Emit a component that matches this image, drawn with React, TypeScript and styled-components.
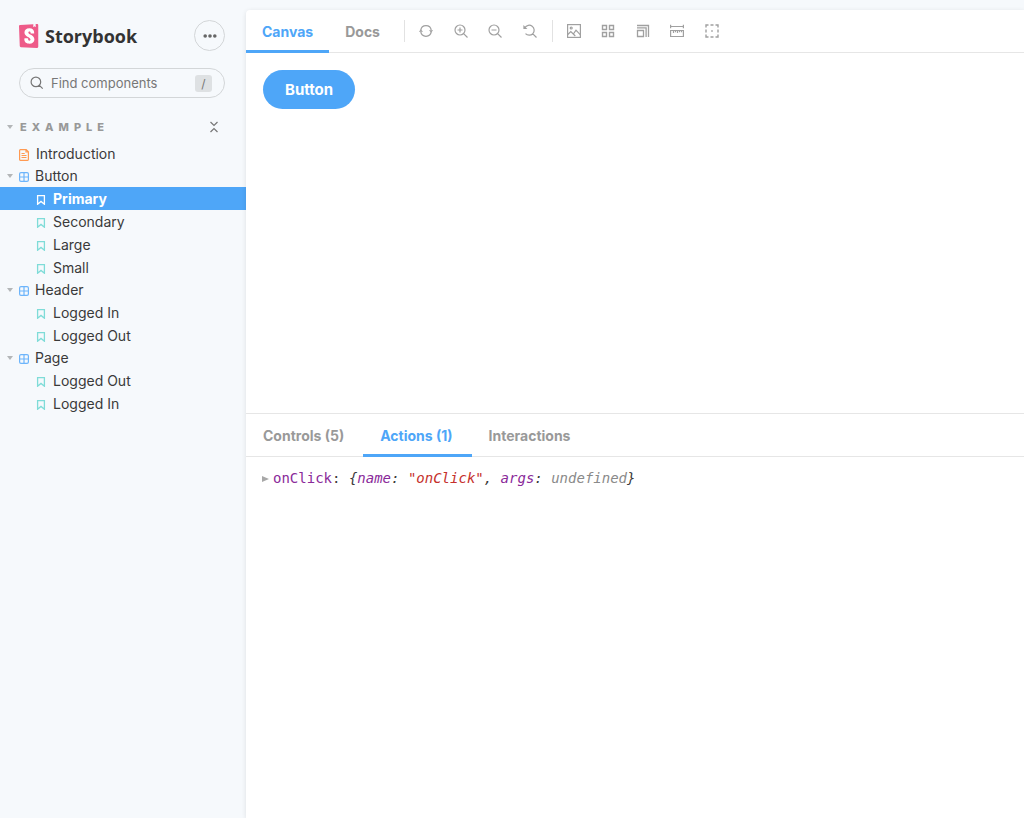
import React from "react";
import styled, { createGlobalStyle, css } from "styled-components";

const color = {
  app: "#f6f9fc",
  accent: "#4ea6f8",
  text: "#3a3a3a",
  muted: "#999999",
  line: "#e6e6e6",
  component: "#6db5fb",
  story: "#7fdcd8",
  document: "#ff9a52",
};

const sans = `Inter, "Liberation Sans", sans-serif`;
const mono = `"DejaVu Sans Mono", "Liberation Mono", monospace`;

const GlobalStyle = createGlobalStyle`
  *, *::before, *::after { box-sizing: border-box; }
  body { margin: 0; background: ${color.app}; font-family: ${sans}; color: ${color.text}; }
  button, input { font-family: inherit; margin: 0; }
  svg { display: block; flex: none; }
`;

const Layout = styled.div`
  display: flex;
  min-height: 100vh;
`;

/* Sidebar */

const Sidebar = styled.aside`
  flex: none;
  width: 246px;
  padding-top: 20px;
`;

const Brand = styled.header`
  display: flex;
  align-items: center;
  justify-content: space-between;
  padding: 0 21px 0 17px;
`;

const BrandLink = styled.a`
  display: flex;
  align-items: center;
  gap: 4px;
  color: #333333;
  font-family: "Open Sans", ${sans};
  font-size: 18px;
  line-height: 22px;
  font-weight: 700;
  text-decoration: none;
`;

const MenuButton = styled.button`
  display: flex;
  align-items: center;
  justify-content: center;
  width: 31px;
  height: 31px;
  padding: 0;
  border: 1px solid #d3d6d8;
  border-radius: 50%;
  background: transparent;
  color: #666666;
`;

const SearchBox = styled.label`
  display: flex;
  align-items: center;
  gap: 7px;
  height: 30px;
  margin: 17px 21px 0 19px;
  padding: 0 12px 0 10px;
  border: 1px solid #d3d6d8;
  border-radius: 15px;
  color: #777777;
`;

const SearchInput = styled.input`
  flex: 1;
  min-width: 0;
  padding: 0;
  border: 0;
  outline: 0;
  background: transparent;
  font-size: 13px;
  line-height: 18px;
  color: ${color.text};
  &::placeholder { color: #777777; opacity: 1; }
`;

const KeyHint = styled.kbd`
  width: 17px;
  border-radius: 3px;
  background: #dee1e3;
  color: #777777;
  font-family: ${sans};
  font-size: 12px;
  line-height: 17px;
  text-align: center;
`;

const SectionHeading = styled.div`
  display: flex;
  align-items: center;
  justify-content: space-between;
  margin-top: 17px;
  padding-right: 27px;
`;

const SectionToggle = styled.button`
  display: flex;
  align-items: center;
  gap: 7px;
  padding: 0 0 0 7px;
  border: 0;
  background: transparent;
  color: ${color.muted};
  font-size: 11px;
  line-height: 24px;
  font-weight: 800;
  letter-spacing: 5px;
  text-transform: uppercase;
`;

const CollapseButton = styled.button`
  padding: 0;
  border: 0;
  background: transparent;
  color: #777777;
`;

const Tree = styled.ul`
  margin: 4px 0 0;
  padding: 0;
  list-style: none;
`;

type Kind = "document" | "component" | "story";

const TreeLink = styled.a<{ $kind: Kind; $selected?: boolean }>`
  display: flex;
  align-items: center;
  height: ${(p) => (p.$kind === "story" ? 23 : 22)}px;
  padding-left: ${(p) => ({ document: 19, component: 7, story: 36 })[p.$kind]}px;
  gap: ${(p) => (p.$kind === "component" ? 6 : 7)}px;
  color: ${color.text};
  font-size: 14px;
  line-height: 20px;
  text-decoration: none;
  > svg:last-of-type {
    margin-top: 2px;
    color: ${(p) => (p.$selected ? "#ffffff" : color[p.$kind])};
  }
  ${(p) =>
    p.$selected &&
    css`
      background: ${color.accent};
      color: #ffffff;
      font-weight: 700;
    `}
`;

/* Main area */

const Main = styled.main`
  display: flex;
  flex: 1;
  flex-direction: column;
  min-width: 0;
  margin-top: 10px;
  border-top-left-radius: 4px;
  background: #ffffff;
  box-shadow: 0 1px 5px rgba(0, 0, 0, 0.1);
`;

const Bar = styled.div`
  display: flex;
  align-items: stretch;
  flex: none;
  height: 43px;
  border-bottom: 1px solid ${color.line};
`;

const TabList = styled.div`
  display: flex;
  height: 43px;
`;

const Tab = styled.button<{ $active?: boolean; $wide?: boolean }>`
  padding: ${(p) => (p.$wide ? "4px 19px 0 17px" : "4px 16px 0")};
  border: 0;
  border-bottom: 3px solid ${(p) => (p.$active ? color.accent : "transparent")};
  background: transparent;
  color: ${(p) => (p.$active ? color.accent : color.muted)};
  font-size: 14px;
  line-height: 20px;
  font-weight: 700;
  white-space: nowrap;
`;

const Divider = styled.span<{ $first?: boolean }>`
  width: 1px;
  height: 22px;
  margin: 10px 14px 0 ${(p) => (p.$first ? 8 : 15)}px;
  background: #e2e2e2;
`;

const Tools = styled.div<{ $width: number }>`
  display: flex;
  align-items: center;
  justify-content: space-between;
  flex: none;
  width: ${(p) => p.$width}px;
`;

const ToolButton = styled.button`
  padding: 0;
  border: 0;
  background: transparent;
  color: #a0a0a0;
`;

const Canvas = styled.section`
  flex: 8 1 0;
`;

const Story = styled.div`
  padding: 17px;
`;

const PrimaryButton = styled.button`
  padding: 10px 22px 9px;
  border: 0;
  border-radius: 48px;
  background: ${color.accent};
  color: #ffffff;
  font-size: 15px;
  line-height: 20px;
  font-weight: 700;
`;

const Addons = styled.section`
  flex: 9 1 0;
  border-top: 1px solid ${color.line};
`;

const Log = styled.div`
  display: flex;
  align-items: center;
  gap: 4px;
  padding: 11px 16px;
  font-family: ${mono};
  font-size: 14px;
  line-height: 20px;
  white-space: pre;
`;

const Expand = styled.button`
  padding: 3px 0 0;
  border: 0;
  background: transparent;
  color: #a8a8a8;
`;

const Preview = styled.span`
  font-style: italic;
`;

const Token = styled.span<{ $type: "name" | "string" | "empty" }>`
  color: ${(p) => ({ name: "#8a2a9a", string: "#c5302b", empty: "#8a8a8a" })[p.$type]};
`;

/* Icons */

const Icon = ({ size = 14, children }: { size?: number; children: React.ReactNode }) => (
  <svg width={size} height={size} viewBox="0 0 14 14" fill="none" stroke="currentColor" strokeWidth="1.2" aria-hidden="true">
    {children}
  </svg>
);

const Logo = () => (
  <svg width="24" height="24" viewBox="0 0 24 24" aria-hidden="true">
    <path fill="#fff" d="M6 3h12v18H6z" />
    <path
      fill="#ee5b89"
      d="M16.34.24l-.12 2.71a.18.18 0 00.29.15l1.06-.8.9.7a.18.18 0 00.28-.14l-.1-2.76 1.33-.1a1.2 1.2 0 011.28 1.2v21.6A1.2 1.2 0 0120 24l-16.1-.72a1.2 1.2 0 01-1.15-1.16l-.75-19.97a1.2 1.2 0 011.13-1.27L16.34.24zM13.64 9.3c0 .47 3.16.24 3.59-.08 0-3.2-1.72-4.89-4.86-4.89-3.15 0-4.9 1.72-4.9 4.29 0 4.45 6 4.53 6 6.96 0 .7-.32 1.1-1.05 1.1-.96 0-1.35-.49-1.3-2.16 0-.36-3.65-.48-3.77 0-.27 4.03 2.23 5.2 5.1 5.2 2.79 0 4.97-1.49 4.97-4.18 0-4.77-6.1-4.64-6.1-7 0-.97.72-1.1 1.13-1.1.45 0 1.25.07 1.19 1.87z"
    />
  </svg>
);

const Caret = () => (
  <svg width="6" height="4" viewBox="0 0 6 4" aria-hidden="true">
    <path d="M0 0h6L3 4z" fill="#b3b6b8" />
  </svg>
);

const DotsIcon = () => (
  <Icon>
    <g fill="currentColor" stroke="none">
      <circle cx="2.2" cy="7" r="1.8" />
      <circle cx="7" cy="7" r="1.8" />
      <circle cx="11.8" cy="7" r="1.8" />
    </g>
  </Icon>
);

const SearchIcon = () => (
  <Icon>
    <path d="M10.7 5.9A4.8 4.8 0 111.1 5.9a4.8 4.8 0 019.6 0zM9.4 9.4l3.3 3.3" />
  </Icon>
);

const CollapseIcon = () => (
  <svg width="10" height="12" viewBox="0 0 10 12" fill="none" stroke="currentColor" strokeWidth="1.2" aria-hidden="true">
    <path d="M1.5 1L5 4.5 8.5 1M1.5 11L5 7.5 8.5 11" />
  </svg>
);

const kindIcon: Record<Kind, React.ReactNode> = {
  document: (
    <svg width="10" height="12" viewBox="0 0 10 12" fill="none" stroke="currentColor" strokeWidth="1.2" aria-hidden="true">
      <path d="M.6 1.4q0-.8.8-.8h5.8l2.2 2.2v7.8q0 .8-.8.8H1.4q-.8 0-.8-.8zM7 .8V3h2.2M2.5 4.5h3.2M2.5 6.5h5M2.5 8.5h5" />
    </svg>
  ),
  component: (
    <svg width="10" height="10" viewBox="0 0 10 10" fill="none" stroke="currentColor" strokeWidth="1.2" aria-hidden="true">
      <rect x=".6" y=".6" width="8.8" height="8.8" rx="1.4" />
      <path d="M5 .6v8.8M.6 5h8.8" />
    </svg>
  ),
  story: (
    <svg width="10" height="10" viewBox="0 0 10 10" fill="none" stroke="currentColor" strokeWidth="1.3" aria-hidden="true">
      <path d="M1.6.6h6.8v8.6L5 6.4 1.6 9.2z" />
    </svg>
  ),
};

const viewTools = [
  {
    label: "Remount component",
    icon: (
      <>
        <path d="M1.75 6.3A5.3 5.3 0 017 1.7a5.3 5.3 0 015.25 4.6M12.25 7.7A5.3 5.3 0 017 12.3a5.3 5.3 0 01-5.25-4.6" />
        <path d="M9.9 6.2h4.4l-2.2 2.4zM-.3 7.8h4.4L1.9 5.4z" fill="currentColor" stroke="none" />
      </>
    ),
  },
  {
    label: "Zoom in",
    icon: <path d="M11 6A5 5 0 111 6a5 5 0 0110 0zM9.6 9.6l3.9 3.9M3.5 6h5M6 3.5v5" />,
  },
  {
    label: "Zoom out",
    icon: <path d="M11 6A5 5 0 111 6a5 5 0 0110 0zM9.6 9.6l3.9 3.9M3.5 6h5" />,
  },
  {
    label: "Reset zoom",
    icon: (
      <>
        <path d="M1.9 3.6A5 5 0 112.5 9.6M9.6 9.6l3.9 3.9" />
        <path d="M.4.9v4h4z" fill="currentColor" stroke="none" />
      </>
    ),
  },
];

const canvasTools = [
  {
    label: "Change the background",
    icon: (
      <>
        <rect x=".6" y=".6" width="12.8" height="12.8" />
        <path d="M.8 10.5l3-3 2.5 2.5L9 6.2l4.4 4.6M6.3 10l2 2" />
        <circle cx="4.2" cy="4" r="1" />
      </>
    ),
  },
  {
    label: "Apply a grid",
    icon: <path d="M1.5 1.5h4v4h-4zM8.5 1.5h4v4h-4zM1.5 8.5h4v4h-4zM8.5 8.5h4v4h-4z" strokeWidth="1.4" />,
  },
  {
    label: "Change the viewport size",
    icon: <path d="M1.5 6.5h6v6h-6zM1 3.9h9.1v9.1M1 1.5h11.5V13" strokeWidth="1.3" />,
  },
  {
    label: "Enable measure",
    icon: <path d="M.6 .8v3.4M13.4 .8v3.4M.5 2.5h13M.6 6.5h12.8v6H.6zM3.5 6.5v2.5M5.5 6.5v1.7M7.5 6.5v2.5M9.5 6.5v1.7M11.5 6.5v1.7" />,
  },
  {
    label: "Apply outlines",
    icon: (
      <>
        <path d="M1 3.5V1h2.5M5.5 1h3M10.5 1H13v2.5M13 5.5v3M13 10.5V13h-2.5M8.5 13h-3M3.5 13H1v-2.5M1 8.5v-3" strokeWidth="1.4" />
        <path d="M6.2 6.2h1.6v1.6H6.2z" fill="currentColor" stroke="none" />
      </>
    ),
  },
];

const entries: { kind: Kind; name: string; selected?: boolean }[] = [
  { kind: "document", name: "Introduction" },
  { kind: "component", name: "Button" },
  { kind: "story", name: "Primary", selected: true },
  { kind: "story", name: "Secondary" },
  { kind: "story", name: "Large" },
  { kind: "story", name: "Small" },
  { kind: "component", name: "Header" },
  { kind: "story", name: "Logged In" },
  { kind: "story", name: "Logged Out" },
  { kind: "component", name: "Page" },
  { kind: "story", name: "Logged Out" },
  { kind: "story", name: "Logged In" },
];

const ToolGroup = ({ tools, width }: { tools: typeof viewTools; width: number }) => (
  <Tools $width={width}>
    {tools.map((tool) => (
      <ToolButton key={tool.label} aria-label={tool.label}>
        <Icon>{tool.icon}</Icon>
      </ToolButton>
    ))}
  </Tools>
);

export default function App() {
  return (
    <>
      <GlobalStyle />
      <Layout>
        <Sidebar>
          <Brand>
            <BrandLink href="#home">
              <Logo />
              Storybook
            </BrandLink>
            <MenuButton aria-label="Shortcuts">
              <DotsIcon />
            </MenuButton>
          </Brand>
          <SearchBox>
            <SearchIcon />
            <SearchInput type="text" placeholder="Find components" aria-label="Find components" />
            <KeyHint>/</KeyHint>
          </SearchBox>
          <SectionHeading>
            <SectionToggle aria-expanded="true">
              <Caret />
              Example
            </SectionToggle>
            <CollapseButton aria-label="Collapse all">
              <CollapseIcon />
            </CollapseButton>
          </SectionHeading>
          <nav aria-label="Stories">
            <Tree>
              {entries.map((entry, index) => (
                <li key={index}>
                  <TreeLink
                    href={`#entry-${index}`}
                    $kind={entry.kind}
                    $selected={entry.selected}
                    aria-current={entry.selected ? "page" : undefined}
                  >
                    {entry.kind === "component" && <Caret />}
                    {kindIcon[entry.kind]}
                    {entry.name}
                  </TreeLink>
                </li>
              ))}
            </Tree>
          </nav>
        </Sidebar>
        <Main>
          <Bar>
            <TabList role="tablist">
              <Tab role="tab" aria-selected="true" $active>Canvas</Tab>
              <Tab role="tab" aria-selected="false">Docs</Tab>
            </TabList>
            <Divider $first />
            <ToolGroup tools={viewTools} width={118} />
            <Divider />
            <ToolGroup tools={canvasTools} width={152} />
          </Bar>
          <Canvas>
            <Story>
              <PrimaryButton>Button</PrimaryButton>
            </Story>
          </Canvas>
          <Addons>
            <Bar>
              <TabList role="tablist">
                <Tab role="tab" aria-selected="false" $wide>Controls (5)</Tab>
                <Tab role="tab" aria-selected="true" $wide $active>Actions (1)</Tab>
                <Tab role="tab" aria-selected="false" $wide>Interactions</Tab>
              </TabList>
            </Bar>
            <Log>
              <Expand aria-label="Expand">
                <svg width="7" height="6" viewBox="0 0 7 6" aria-hidden="true">
                  <path d="M0 0l7 3-7 3z" fill="currentColor" />
                </svg>
              </Expand>
              <span>
                <Token $type="name">onClick</Token>
                {": "}
                <Preview>
                  {"{"}
                  <Token $type="name">name</Token>
                  {": "}
                  <Token $type="string">"onClick"</Token>
                  {", "}
                  <Token $type="name">args</Token>
                  {": "}
                  <Token $type="empty">undefined</Token>
                  {"}"}
                </Preview>
              </span>
            </Log>
          </Addons>
        </Main>
      </Layout>
    </>
  );
}
